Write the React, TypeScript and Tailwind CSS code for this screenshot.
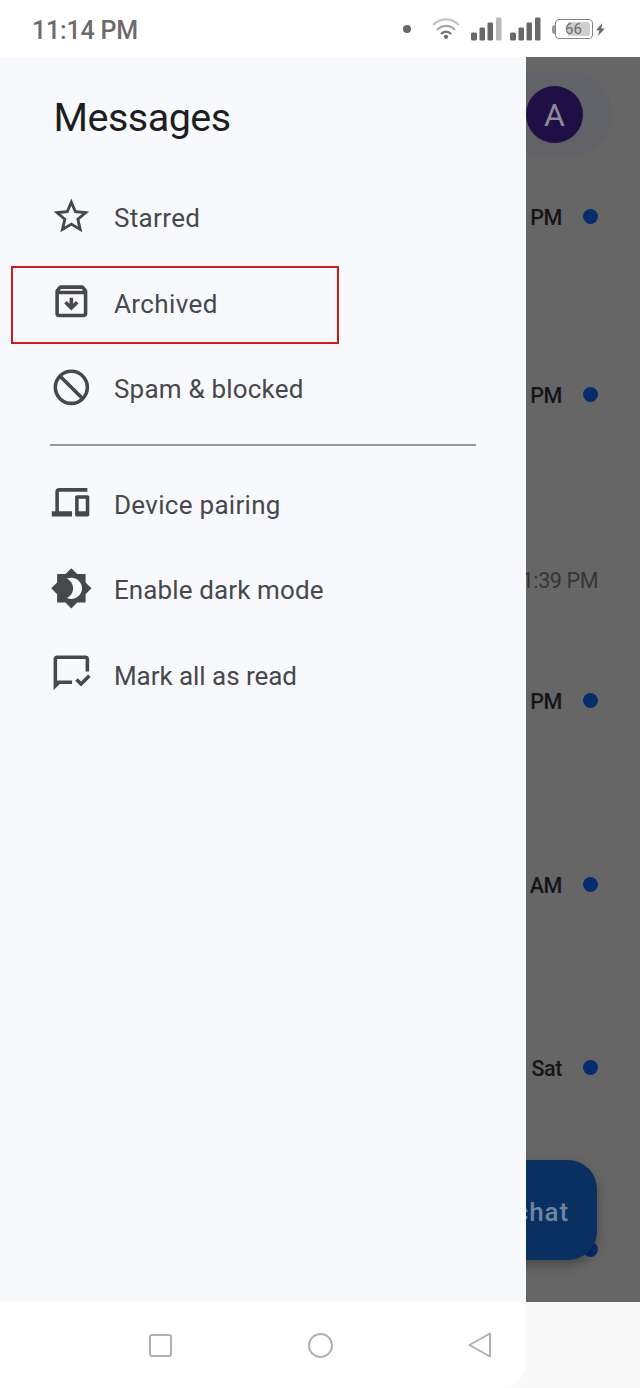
import React from 'react';

const ICONS = {
  star: (
    <path d="M22 9.24l-7.19-.62L12 2 9.19 8.63 2 9.24l5.46 4.73L5.82 21 12 17.27 18.18 21l-1.63-7.03L22 9.24zM12 15.4l-3.76 2.27 1-4.28-3.32-2.88 4.38-.38L12 6.1l1.71 4.04 4.38.38-3.32 2.88 1 4.28L12 15.4z" />
  ),
  archive: (
    <>
      <path
        fillRule="evenodd"
        d="M20.54 5.23l-1.39-1.68C18.88 3.21 18.47 3 18 3H6c-.47 0-.88.21-1.16.55L3.46 5.23C3.17 5.57 3 6.02 3 6.5V19c0 1.1.9 2 2 2h14c1.1 0 2-.9 2-2V6.5c0-.48-.17-.93-.46-1.27zM6.24 5h11.52l.83 1H5.42l.82-1zM5 19V8h14v11H5z"
      />
      <path d="M12 17.2l-4-4 1.4-1.4 1.6 1.6V10h2v3.4l1.6-1.6 1.4 1.4z" />
    </>
  ),
  block: (
    <g fill="none" stroke="currentColor" strokeWidth="2">
      <circle cx="12" cy="12" r="9" />
      <path d="M5.6 5.6l12.8 12.8" />
    </g>
  ),
  devices: (
    <>
      <path d="M3 17V6c0-1.1.9-2 2-2h16v2H5v11h7.4v3H1v-3z" />
      <path
        fillRule="evenodd"
        d="M15.1 8h6c.55 0 1 .45 1 1v10c0 .55-.45 1-1 1h-6c-.55 0-1-.45-1-1V9c0-.55.45-1 1-1zm1 2v7h4v-7z"
      />
    </>
  ),
  dark: (
    <path d="M20 8.69V4h-4.69L12 .69 8.69 4H4v4.69L.69 12 4 15.31V20h4.69L12 23.31 15.31 20H20v-4.69L23.31 12 20 8.69zM12 18c-.89 0-1.74-.2-2.5-.55C11.56 16.5 13 14.42 13 12s-1.44-4.5-3.5-5.45C10.26 6.2 11.11 6 12 6c3.31 0 6 2.69 6 6s-2.69 6-6 6z" />
  ),
  read: (
    <>
      <path d="M2 21.5V4c0-1.1.9-2 2-2h16c1.1 0 2 .9 2 2v7h-2V4H4v12h8.4v2H5.5z" />
      <path d="M14.9 15.4l2.6 2.6 4.6-4.6" fill="none" stroke="currentColor" strokeWidth="2" />
    </>
  ),
};

interface MenuItemProps {
  icon: keyof typeof ICONS;
  label: string;
  tracking?: string;
}

const MenuItem: React.FC<MenuItemProps> = ({ icon, label, tracking = '' }) => (
  <div className="flex h-[85.5px] items-center pl-[49.7px]">
    <svg viewBox="0 0 24 24" fill="currentColor" className="mb-[3px] size-[42.7px]">
      {ICONS[icon]}
    </svg>
    <span className={`ml-[21.6px] whitespace-nowrap pt-[1.5px] text-[26px] ${tracking}`}>{label}</span>
  </div>
);

const Signal: React.FC<{ weak?: boolean }> = ({ weak }) => (
  <svg width="31" height="24" viewBox="0 0 31 24" fill="#686868">
    <rect x="0" y="15.5" width="6" height="8" rx="1.5" />
    <rect x="8.5" y="10.5" width="5.5" height="13" rx="1.2" />
    <rect x="16.5" y="5.5" width="5.5" height="18" rx="1.2" />
    <rect x="25" y="0.5" width="5.5" height="23" rx="1.2" fill={weak ? '#b9b9b9' : '#686868'} />
  </svg>
);

const StatusBar: React.FC = () => (
  <div className="flex h-[57px] items-center bg-white pl-[32px] pt-[1px] text-[#6b6b6b]">
    <span className="w-[371px] pt-[3px] text-[25px] font-medium tracking-[-0.2px]">11:14 PM</span>
    <span className="size-2 rounded-full bg-[#666]" />
    <svg width="28" height="22" viewBox="0 0 28 22" fill="none" strokeWidth="2.2" className="ml-[21px]">
      <path d="M1 7C8.5-.5 19.5-.5 27 7" stroke="#c4c4c4" />
      <path d="M5 12c5-5.5 13-5.5 18 0" stroke="#a8a8a8" />
      <path d="M9 16c3-3.2 7-3.2 10 0" stroke="#747474" />
      <circle cx="14" cy="18.8" r="2.1" fill="#666" />
    </svg>
    <div className="ml-[11px] flex gap-[7.5px]">
      <Signal weak />
      <Signal />
    </div>
    <div className="ml-[11px] flex items-center">
      <span className="h-[9px] w-[3px] rounded-l-sm bg-[#999]" />
      <div className="flex h-[20px] w-[38px] rounded-[4px] border-[1.5px] border-[#858585] p-[2px]">
        <span className="flex h-full w-[32px] items-center justify-center rounded-[2px] bg-linear-to-r from-white from-30% to-[#cfcfcf] to-30% pt-[1px] text-[15px]">
          66
        </span>
      </div>
      <svg width="9" height="13" viewBox="0 0 9 13" fill="#666" className="ml-[3px]">
        <path d="M6.5 0L0 7.3h3.4L2 13l6.8-7.6H5.2z" />
      </svg>
    </div>
  </div>
);

const Drawer: React.FC = () => (
  <div className="relative w-[526px] shrink-0 bg-[#f8f9fd] text-[#47484b]">
    <h1 className="h-[118px] pl-[53.5px] pt-[31px] text-[39.5px] leading-[60px] tracking-[-0.5px] text-[#1d1e21]">
      Messages
    </h1>
    <MenuItem icon="star" label="Starred" tracking="tracking-[0.35px]" />
    <MenuItem icon="archive" label="Archived" tracking="tracking-[0.4px]" />
    <MenuItem icon="block" label="Spam & blocked" tracking="tracking-[0.2px]" />
    <div className="ml-[50px] mt-[12px] mb-[16px] h-[2px] w-[426px] bg-[#96999d]" />
    <MenuItem icon="devices" label="Device pairing" tracking="tracking-[0.3px]" />
    <MenuItem icon="dark" label="Enable dark mode" tracking="tracking-[0.12px]" />
    <MenuItem icon="read" label="Mark all as read" tracking="tracking-[-0.05px]" />
    <div className="absolute left-[11px] top-[209px] h-[78px] w-[328px] border-2 border-[#cc1c1c]" />
  </div>
);

const THREADS = [
  { time: 'PM', unread: true, height: 'h-[178px]' },
  { time: 'PM', unread: true, height: 'h-[185px]' },
  { time: '1:39 PM', unread: false, height: 'h-[121px]' },
  { time: 'PM', unread: true, height: 'h-[184px]' },
  { time: 'AM', unread: true, height: 'h-[183px]' },
  { time: 'Sat', unread: true, height: 'h-[182px]' },
  { time: '', unread: true, height: 'h-[60px]' },
];

const Conversations: React.FC = () => (
  <div className="relative min-w-0 flex-1 overflow-hidden bg-[#666] text-[22px] text-[#151515]">
    <div className="h-[145px] pt-[14px]">
      <div className="flex h-[86px] w-[86px] items-center rounded-r-full bg-[#616368]">
        <span className="flex size-[57px] items-center justify-center rounded-full bg-[#200f47] pt-[2px] text-[32px] text-[#8d8993]">
          A
        </span>
      </div>
    </div>
    {THREADS.map((t, i) => (
      <div key={i} className={`pr-[42px] ${t.height}`}>
        <div className="flex h-[30px] items-center justify-end whitespace-nowrap">
          <span className={t.unread ? 'pt-[2px] text-[21.5px] font-medium tracking-[-0.4px]' : 'pt-[2px] text-[21.5px] tracking-[-0.4px] text-[#343538]'}>
            {t.time}
          </span>
          {t.unread && <span className="mb-[2px] ml-[21px] size-[15px] rounded-full bg-[#062c6c]" />}
        </div>
      </div>
    ))}
    {/* start chat button, mostly behind the drawer */}
    <div className="absolute -left-[120px] top-[1103px] flex h-[100px] w-[191px] items-center justify-end rounded-[29px] bg-[#0a2f61] pr-[28px] pt-[5px] text-[26px] font-medium tracking-[0.9px] text-[#71849f] shadow-[0_5px_12px_rgba(0,0,0,0.3)]">
      chat
    </div>
  </div>
);

const NavBar: React.FC = () => (
  <div className="h-[86px] bg-[#f9f9f9]">
    <div className="h-full w-[526px] rounded-br-[26px] bg-white">
      <div className="flex h-full items-center pl-[149px]">
        <span className="size-[23px] rounded-[3px] border-2 border-[#b0b0b0]" />
        <span className="ml-[135.5px] size-[25px] rounded-full border-2 border-[#b0b0b0]" />
        <svg width="24" height="26" viewBox="0 0 24 26" fill="none" stroke="#b0b0b0" strokeWidth="2" strokeLinejoin="round" className="ml-[135.5px]">
          <path d="M22 1.5v23L1.5 13z" />
        </svg>
      </div>
    </div>
  </div>
);

export default function App() {
  return (
    <div className="flex h-[1388px] w-[640px] flex-col overflow-hidden bg-white font-[Roboto,sans-serif]">
      <StatusBar />
      <div className="flex h-[1245px]">
        <Drawer />
        <Conversations />
      </div>
      <NavBar />
    </div>
  );
}
